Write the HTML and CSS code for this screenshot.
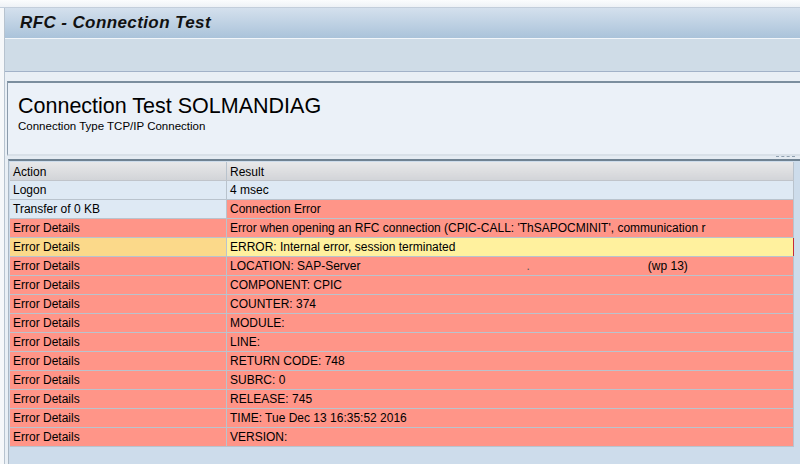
FILE: index.html
```html
<!DOCTYPE html>
<html lang="en">
<head>
  <meta charset="UTF-8" />
  <title>RFC - Connection Test</title>
  <link rel="stylesheet" href="styles.css">
</head>
<body>
<div class="topstrip"></div>
<div class="frame">
  <div class="titlebar">RFC - Connection Test</div>
  <div class="toolbar"></div>
  <div class="content">
    <div class="header-panel">
      <h1>Connection Test SOLMANDIAG</h1>
      <div class="subtitle">Connection Type TCP/IP Connection</div>
    </div>
    <div class="splitter"><span class="grip"></span></div>
    <div class="grid-area">
      <table class="results">
        <tr class="head"><th class="col-action">Action</th><th>Result</th></tr>
        <tr class="ok"><td>Logon</td><td>4 msec</td></tr>
        <tr class="ok"><td>Transfer of 0 KB</td><td class="err">Connection Error</td></tr>
        <tr class="err"><td>Error Details</td><td>Error when opening an RFC connection (CPIC-CALL: 'ThSAPOCMINIT', communication r</td></tr>
        <tr class="sel"><td>Error Details</td><td>ERROR: Internal error, session terminated</td></tr>
        <tr class="err"><td>Error Details</td><td>LOCATION: SAP-Server<span class="dot">.</span><span class="wp">(wp 13)</span></td></tr>
        <tr class="err"><td>Error Details</td><td>COMPONENT: CPIC</td></tr>
        <tr class="err"><td>Error Details</td><td>COUNTER: 374</td></tr>
        <tr class="err"><td>Error Details</td><td>MODULE:</td></tr>
        <tr class="err"><td>Error Details</td><td>LINE:</td></tr>
        <tr class="err"><td>Error Details</td><td>RETURN CODE: 748</td></tr>
        <tr class="err"><td>Error Details</td><td>SUBRC: 0</td></tr>
        <tr class="err"><td>Error Details</td><td>RELEASE: 745</td></tr>
        <tr class="err"><td>Error Details</td><td>TIME: Tue Dec 13 16:35:52 2016</td></tr>
        <tr class="err"><td>Error Details</td><td>VERSION:</td></tr>
      </table>
    </div>
  </div>
</div>
</body>
</html>
```

FILE: styles.css
```css
html, body {
  height: 100%;
}
body {
  margin: 0;
  background-color: #f6f8fa;
  font-family: "Liberation Sans", Arial, sans-serif;
  color: #000;
  overflow: hidden;
}
.topstrip {
  height: 7px;
  background: linear-gradient(#fbfcfd, #eef2f6);
  border-bottom: 1px solid #c3cedb;
}
.frame {
  margin-left: 4px;
  border-left: 1px solid #b7c3cf;
  height: calc(100% - 8px);
  display: flex;
  flex-direction: column;
}
.titlebar {
  height: 30px;
  line-height: 30px;
  padding-left: 15px;
  background: linear-gradient(#d4e0ed, #aac3da);
  font-size: 17px;
  letter-spacing: 0.4px;
  font-weight: bold;
  font-style: italic;
  color: #111;
  border-bottom: 1px solid #f2f6fa;
}
.toolbar {
  height: 32px;
  background-color: #cfdce7;
  border-bottom: 1px solid #a2b2c8;
}
.content {
  flex: 1;
  display: flex;
  flex-direction: column;
  background-color: #e9eff5;
  padding-top: 9px;
}
.header-panel {
  margin-left: 2px;
  height: 71px;
  border-top: 2px solid #7b8e9e;
  border-left: 1px solid #8b9bab;
  border-bottom: 2px solid #d8e0e8;
  background-color: #ebf1f8;
  padding-left: 10px;
}
h1 {
  margin: 11px 0 0 0;
  font-size: 21.5px;
  font-weight: normal;
  line-height: 25px;
  color: #000;
}
.subtitle {
  font-size: 11.5px;
  line-height: 14px;
}
.splitter {
  height: 3px;
  background-color: #e4ebf2;
  position: relative;
}
.grip {
  position: absolute;
  right: 5px;
  top: 0;
  width: 19px;
  border-top: 1px dashed #8fa0b0;
}
.grid-area {
  flex: 1;
  border-top: 2px solid #6f8292;
  margin-left: 3px;
  border-left: 1px solid #a9b7c4;
  background-color: #cddceb;
  padding: 1px 6px 0 1px;
}
.results {
  border-collapse: collapse;
  width: 784px;
  font-size: 12px;
  table-layout: fixed;
}
.results th, .results td {
  height: 18px;
  padding: 0 0 0 3px;
  text-align: left;
  font-weight: normal;
  white-space: nowrap;
  overflow: hidden;
  border-bottom: 1px solid #b9c3cd;
  border-right: 1px solid #b9c3cd;
}
.col-action {
  width: 213px;
}
.head th {
  height: 16px;
  padding-top: 2px;
  background: linear-gradient(#e8e8e9, #d2d4d8);
  border-bottom: 1px solid #c0c4ca;
}
.ok td {
  background-color: #dee9f4;
}
.results td.err, .err td {
  background-color: #ff9588;
}
.sel td {
  background-color: #fbd98a;
  border-top: 1px solid #8e8a80;
}
.sel td + td {
  background-color: #fff19e;
  border-left: 1px solid #c62a38;
  border-right: 1px solid #c62a38;
}
.dot {
  margin-left: 166px;
  color: #555;
}
.wp {
  margin-left: 118px;
}
```
